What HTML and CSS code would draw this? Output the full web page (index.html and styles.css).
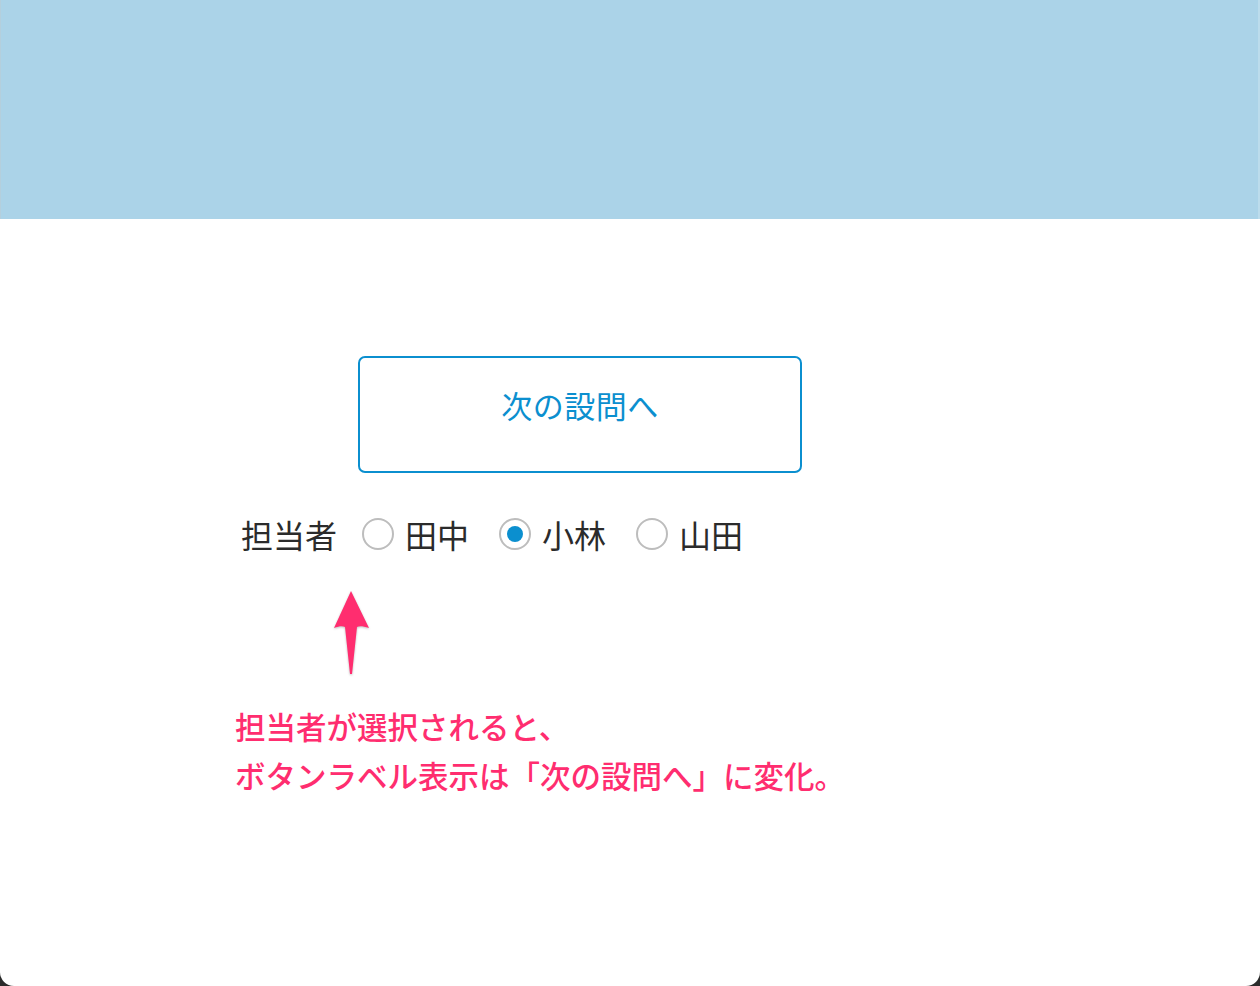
FILE: index.html
```html
<!DOCTYPE html>
<html lang="ja">
<head>
    <meta charset="UTF-8">
    <meta name="viewport" content="width=device-width, initial-scale=1.0">
    <title>次の設問へ</title>
    <link rel="stylesheet" href="styles.css">
</head>
<body>
    <div class="screen">
        <header class="top-bar"></header>

        <main class="content">
            <button type="button" class="next-button">次の設問へ</button>

            <div class="assignee">
                <span class="assignee-label">担当者</span>
                <label class="choice">
                    <input type="radio" name="assignee" value="tanaka">
                    <span>田中</span>
                </label>
                <label class="choice">
                    <input type="radio" name="assignee" value="kobayashi" checked>
                    <span>小林</span>
                </label>
                <label class="choice">
                    <input type="radio" name="assignee" value="yamada">
                    <span>山田</span>
                </label>
            </div>

            <svg class="arrow" width="40" height="86" viewBox="0 0 40 86" aria-hidden="true">
                <path d="M18 1 L1 38 C6 36 10 36 12 37 L17 84 L19 84 L24 37 C26 36 30 36 36 38 Z" fill="#ff2d6f"/>
            </svg>

            <p class="note">担当者が選択されると、<br>ボタンラベル表示は「次の設問へ」に変化。</p>
        </main>
    </div>
</body>
</html>
```

FILE: styles.css
```css
body {
    margin: 0;
    background-color: #2b2b2b;
    font-family: "Noto Sans CJK JP", sans-serif;
}
.screen {
    height: 986px;
    background-color: white;
    border-radius: 0 0 14px 14px;
    overflow: hidden;
}
.top-bar {
    height: 219px;
    background-color: #abd3e8;
    border-left: 1px solid #b4cfdd;
    border-right: 2px solid #bcdcec;
}
.content {
    display: flex;
    flex-direction: column;
    align-items: flex-start;
    padding-left: 235px;
}
.next-button {
    margin-top: 137px;
    margin-left: 123px;
    width: 444px;
    height: 117px;
    padding: 0 0 20px;
    background-color: white;
    border: 2px solid #0b8fcf;
    border-radius: 7px;
    color: #0b8fcf;
    font-family: inherit;
    font-size: 31px;
    letter-spacing: 0.5px;
    cursor: pointer;
}
.assignee {
    display: flex;
    align-items: center;
    margin-top: 38px;
    margin-left: 6px;
    font-size: 32px;
    color: #2b2b2b;
}
.assignee-label {
    margin-right: 25px;
}
.choice {
    display: flex;
    align-items: center;
    gap: 11px;
    margin-right: 30px;
}
.choice input {
    appearance: none;
    margin: 0;
    width: 32px;
    height: 32px;
    border: 2px solid #bdbdbd;
    border-radius: 50%;
    display: grid;
    place-content: center;
}
.choice input:checked::before {
    content: "";
    width: 16px;
    height: 16px;
    border-radius: 50%;
    background-color: #0b8fcf;
}
.arrow {
    margin-top: 33px;
    margin-left: 98px;
    filter: drop-shadow(0 1px 1px rgba(0,0,0,0.25));
}
.note {
    margin: 26px 0 0;
    color: #ff2d6f;
    font-size: 30.5px;
    font-weight: 500;
    line-height: 49px;
}
```
